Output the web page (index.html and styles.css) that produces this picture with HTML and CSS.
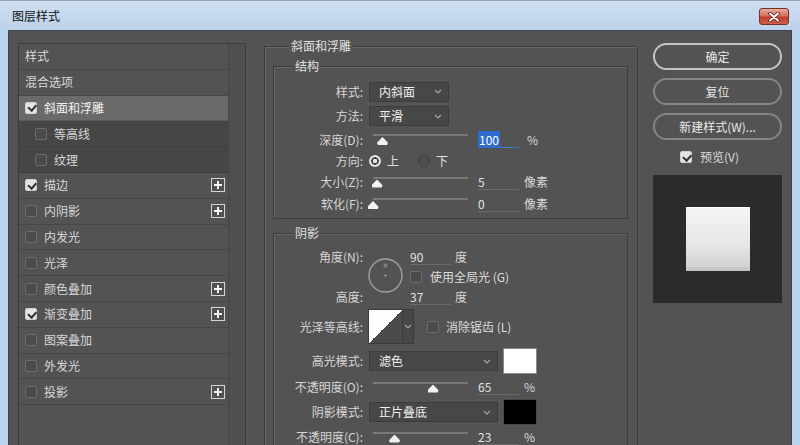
FILE: index.html
```html
<!DOCTYPE html>
<html lang="zh-CN">
<head>
<meta charset="utf-8">
<title>图层样式</title>
<link rel="stylesheet" href="styles.css">
</head>
<body>
<div class="win">
  <div class="titlebar">
    <span class="title">图层样式</span>
    <div class="close">
      <svg width="12" height="10" viewBox="0 0 12 10"><path d="M2 1.5 L10 8.5 M10 1.5 L2 8.5" stroke="#5a1d16" stroke-width="3.6" stroke-linecap="round"/><path d="M2 1.5 L10 8.5 M10 1.5 L2 8.5" stroke="#fff" stroke-width="2" stroke-linecap="round"/></svg>
    </div>
  </div>
  <div class="frame">
    <div class="content">
      <div class="layers">
        <div class="list">
          <div class="item">样式</div>
          <div class="item">混合选项</div>
          <div class="item sel"><span class="cb on"></span>斜面和浮雕</div>
          <div class="item sub"><span class="cb"></span>等高线</div>
          <div class="item sub"><span class="cb"></span>纹理</div>
          <div class="item"><span class="cb on"></span>描边<span class="plus"></span></div>
          <div class="item"><span class="cb"></span>内阴影<span class="plus"></span></div>
          <div class="item"><span class="cb"></span>内发光</div>
          <div class="item"><span class="cb"></span>光泽</div>
          <div class="item"><span class="cb"></span>颜色叠加<span class="plus"></span></div>
          <div class="item"><span class="cb on"></span>渐变叠加<span class="plus"></span></div>
          <div class="item"><span class="cb"></span>图案叠加</div>
          <div class="item"><span class="cb"></span>外发光</div>
          <div class="item"><span class="cb"></span>投影<span class="plus"></span></div>
        </div>
        <div class="scroll"></div>
      </div>

      <fieldset class="outer">
        <legend>斜面和浮雕</legend>
        <fieldset class="inner">
          <legend>结构</legend>
          <div class="row h25"><div class="lbl">样式:</div>
            <div class="dd w80"><span>内斜面</span><svg class="chev" width="8" height="5" viewBox="0 0 8 5"><path d="M1 1 L4 4 L7 1" stroke="#a8a8a8" stroke-width="1.2" fill="none"/></svg></div>
          </div>
          <div class="row h24"><div class="lbl">方法:</div>
            <div class="dd w80"><span>平滑</span><svg class="chev" width="8" height="5" viewBox="0 0 8 5"><path d="M1 1 L4 4 L7 1" stroke="#a8a8a8" stroke-width="1.2" fill="none"/></svg></div>
          </div>
          <div class="row h23"><div class="lbl">深度(D):</div>
            <div class="slider"><div class="track"></div><div class="thumb" style="margin-left:8px"></div></div>
            <div class="num focus"><span class="hl">100</span></div><span class="unit u8">%</span>
          </div>
          <div class="row h19"><div class="lbl">方向:</div>
            <span class="radio on"></span><span class="rtxt">上</span>
            <span class="radio off"></span><span class="rtxt">下</span>
          </div>
          <div class="row h24"><div class="lbl">大小(Z):</div>
            <div class="slider"><div class="track"></div><div class="thumb" style="margin-left:2.5px"></div></div>
            <div class="num">5</div><span class="unit">像素</span>
          </div>
          <div class="row h19"><div class="lbl">软化(F):</div>
            <div class="slider"><div class="track"></div><div class="thumb" style="margin-left:-1.5px"></div></div>
            <div class="num">0</div><span class="unit">像素</span>
          </div>
        </fieldset>

        <fieldset class="inner shadow">
          <legend>阴影</legend>
          <div class="angle">
            <div class="lblcol">
              <div class="lbl r20">角度(N):</div>
              <div class="r20"></div>
              <div class="lbl r20">高度:</div>
            </div>
            <svg class="dial" width="35" height="35" viewBox="0 0 35 35"><circle cx="17.5" cy="17.5" r="16.5" fill="none" stroke="#a0a0a0" stroke-width="1.4"/><circle cx="17.5" cy="7.5" r="1.4" fill="none" stroke="#aaa" stroke-width="0.9"/><circle cx="17.5" cy="17.5" r="1.1" fill="#aaa"/></svg>
            <div class="valcol">
              <div class="r20"><div class="num">90</div><span class="unit u4">度</span></div>
              <div class="r20"><span class="cb"></span><span class="cbtxt">使用全局光 (G)</span></div>
              <div class="r20"><div class="num">37</div><span class="unit u4">度</span></div>
            </div>
          </div>
          <div class="row h39"><div class="lbl">光泽等高线:</div>
            <div class="contour"></div>
            <div class="cdrop"><svg width="8" height="5" viewBox="0 0 8 5"><path d="M1 1 L4 4 L7 1" stroke="#a8a8a8" stroke-width="1.2" fill="none"/></svg></div>
            <span class="cb aa"></span><span class="cbtxt">消除锯齿 (L)</span>
          </div>
          <div class="row h30"><div class="lbl">高光模式:</div>
            <div class="dd w129"><span>滤色</span><svg class="chev" width="8" height="5" viewBox="0 0 8 5"><path d="M1 1 L4 4 L7 1" stroke="#a8a8a8" stroke-width="1.2" fill="none"/></svg></div>
            <div class="swatch white"></div>
          </div>
          <div class="row h22"><div class="lbl">不透明度(O):</div>
            <div class="slider"><div class="track"></div><div class="thumb" style="margin-left:58.5px"></div></div>
            <div class="num">65</div><span class="unit u5">%</span>
          </div>
          <div class="row h28"><div class="lbl">阴影模式:</div>
            <div class="dd w129"><span>正片叠底</span><svg class="chev" width="8" height="5" viewBox="0 0 8 5"><path d="M1 1 L4 4 L7 1" stroke="#a8a8a8" stroke-width="1.2" fill="none"/></svg></div>
            <div class="swatch black"></div>
          </div>
          <div class="row h22"><div class="lbl">不透明度(C):</div>
            <div class="slider"><div class="track"></div><div class="thumb" style="margin-left:20px"></div></div>
            <div class="num">23</div><span class="unit u5">%</span>
          </div>
        </fieldset>
      </fieldset>

      <div class="right">
        <div class="btn primary">确定</div>
        <div class="btn">复位</div>
        <div class="btn">新建样式(W)...</div>
        <div class="preview-row"><span class="cb on"></span><span class="cbtxt">预览(V)</span></div>
        <div class="preview"><div class="square"></div></div>
      </div>
    </div>
  </div>
</div>
</body>
</html>
```
FILE: styles.css
```css
* { box-sizing: border-box; margin: 0; padding: 0; }
html, body { width: 800px; height: 445px; overflow: hidden; }
body {
  font-family: "Noto Sans CJK SC", "Noto Sans", sans-serif;
  font-size: 12px;
  line-height: 14px;
  color: #d8d8d8;
  background: #bcd3ec;
}
.win {
  width: 800px; height: 445px;
  display: flex; flex-direction: column;
  background: #bcd3ec;
  border-top: 1px solid #8ea3ba;
}
.titlebar {
  height: 29px; flex: none;
  display: flex; align-items: center;
  padding: 0 11px 0 12px;
  background: linear-gradient(#cfdff1, #bcd2ea);
}
.title { flex: 1; color: #111; margin-top: 1px; }
.close {
  width: 30px; height: 17px; margin-top: 2px;
  border: 1px solid #74312a; border-radius: 3px;
  background: linear-gradient(#e9aa9e, #d8705f 45%, #c43d2e 55%, #d0604c);
  display: flex; align-items: center; justify-content: center;
}
.frame { flex: 1; display: flex; padding: 0 8px; min-height: 0; }
.content {
  flex: 1; display: flex; align-items: flex-start;
  background: #535353;
  border: 1px solid #3d4652; border-bottom: 0;
  padding-left: 9px;
  overflow: hidden;
}

/* left list */
.layers {
  width: 228px; height: 420px; flex: none;
  margin-top: 12px;
  border: 1px solid #3b3b3b;
  display: flex;
}
.list { width: 209px; flex: none; }
.scroll { flex: 1; background: #4f4f4f; border-left: 1px solid #454545; }
.item {
  height: 25.8px;
  border-bottom: 1px solid #474747;
  display: flex; align-items: center;
  padding-left: 6px; padding-right: 3px;
  color: #d8d8d8;
}
.item .cb { margin-right: 7px; }
.item.sel { background: #6a6a6a; color: #f2f2f2; border-bottom-color: #5a5a5a; }
.item.sub { background: #464646; padding-left: 16px; border-bottom-color: #3e3e3e; }
.plus {
  margin-left: auto;
  width: 14px; height: 14px;
  border: 1px solid #d4d4d4;
  background:
    linear-gradient(#f4f4f4, #f4f4f4) center / 8px 2px no-repeat,
    linear-gradient(#f4f4f4, #f4f4f4) center / 2px 8px no-repeat,
    #505050;
}

/* checkbox */
.cb {
  width: 12px; height: 12px; flex: none;
  border: 1px solid #6c6c6c; border-radius: 2px;
  background: #4b4b4b;
  position: relative;
}
.cb.on { background: #e4e4e4; border-color: #cfcfcf; }
.cb.on::after {
  content: ""; position: absolute;
  left: 2px; top: 1.5px;
  width: 6px; height: 3.5px;
  border-left: 2px solid #353535; border-bottom: 2px solid #353535;
  transform: rotate(-48deg);
}
.cbtxt { margin-left: 8px; color: #dcdcdc; }

/* fieldsets */
fieldset {
  border: 1px solid #3d3d3d;
  box-shadow: inset 1px 1px 0 #666;
  min-width: 0;
}
legend { padding: 0 2px; background: #535353; color: #e0e0e0; line-height: 14px; }
.outer {
  width: 374px; height: 430px; flex: none;
  margin-left: 18px; margin-top: 8px;
  padding: 6px 9px 0 8px;
}
.outer > legend { margin-left: 16px; }
.inner { width: 355px; padding: 6px 0 5px; }
.inner > legend { margin-left: 19px; }
.shadow { margin-top: 7px; height: 240px; padding-top: 7px; }

.row { display: flex; align-items: center; }
.h19 { height: 19px; } .h22 { height: 22px; } .h23 { height: 23px; }
.h24 { height: 24px; } .h25 { height: 25px; } .h28 { height: 28px; }
.h30 { height: 30px; } .h39 { height: 39px; }
.lbl { width: 95px; flex: none; padding-right: 6px; text-align: right; color: #d6d6d6; }

.dd {
  height: 20px; flex: none;
  background: #474747;
  border: 1px solid #3c3c3c;
  display: flex; align-items: center; justify-content: space-between;
  padding: 0 6px 0 9px;
  color: #f0f0f0;
}
.w80 { width: 80px; }
.w129 { width: 129px; }

.slider { width: 109px; flex: none; display: flex; flex-direction: column; gap: 1px; }
.track { margin-left: 4px; width: 95px; height: 2px; background: #787878; }
.thumb {
  width: 11px; height: 8px;
  background: #f2f2f2;
  clip-path: polygon(50% 0, 100% 72%, 92% 100%, 8% 100%, 0 72%);
}
.num {
  width: 41px; height: 16px; flex: none;
  border-bottom: 1px solid #6a6a6a;
  color: #e2e2e2; line-height: 15px;
}
.num.focus { border-bottom-color: #3d7bd0; }
.hl { background: #2f6ccd; color: #fff; padding: 0 1px; }
.unit { margin-left: 5px; color: #d8d8d8; }
.u8 { margin-left: 8px; }
.u4 { margin-left: 4px; }
.u5 { margin-left: 5px; }

.radio {
  width: 12px; height: 12px; border-radius: 50%; flex: none;
}
.radio.on {
  background: radial-gradient(circle, #e6e6e6 0 2px, #3c3c3c 2.5px 3.5px, #e2e2e2 4px);
}
.radio.off { border: 1px solid #3e3e3e; background: #4d4d4d; margin-left: 19px; }
.rtxt { margin-left: 6px; color: #e0e0e0; }

.angle { display: flex; height: 60px; }
.lblcol, .valcol { display: flex; flex-direction: column; flex: none; }
.r20 { height: 20px; display: flex; align-items: center; justify-content: flex-end; }
.valcol .r20 { justify-content: flex-start; }
.dial { flex: none; margin-left: -1px; align-self: center; margin-bottom: 4px; }
.valcol { margin-left: 7px; }

.contour {
  width: 35px; height: 35px; flex: none;
  margin-left: -1px;
  border: 1px solid #3a3a3a;
  background: linear-gradient(to bottom right, #fdfdfd 50%, #4b4b4b 50%);
}
.cdrop {
  width: 11px; height: 35px; flex: none;
  background: #474747; border: 1px solid #3a3a3a; border-left: 0;
  display: flex; align-items: center; justify-content: center;
}
.cb.aa { margin-left: 13px; }
.row .cbtxt { margin-left: 7px; }

.swatch { width: 34px; height: 26px; flex: none; margin-left: 5px; }
.swatch.white { background: #fff; border: 1px solid #8a8a8a; }
.swatch.black { background: #000; border: 1px solid #474747; }

/* right column */
.right { width: 129px; flex: none; margin-left: 15px; margin-top: 12px; display: flex; flex-direction: column; }
.btn {
  height: 27px; margin-bottom: 8px;
  border: 2px solid #858585; border-radius: 14px;
  display: flex; align-items: center; justify-content: center;
  color: #e8e8e8;
}
.btn.primary { border-color: #c4c4c4; }
.preview-row { height: 18px; display: flex; align-items: center; padding-left: 27px; }
.preview {
  height: 128px; margin-top: 9px;
  background: #2b2b2b;
  display: flex; align-items: center; justify-content: center;
}
.square {
  width: 64px; height: 64px;
  background: linear-gradient(#f4f4f4, #e6e6e6 60%, #d2d2d2 92%, #c2c2c2);
  box-shadow: inset 0 1px 0 #fff;
}
```
